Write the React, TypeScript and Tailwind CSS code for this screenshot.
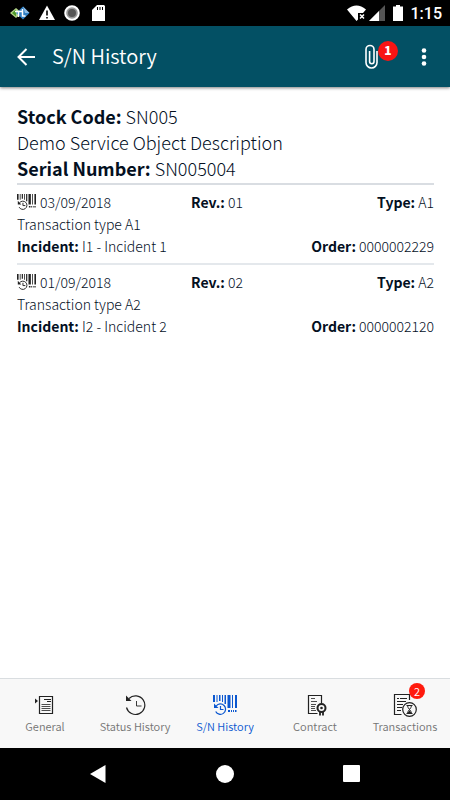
import type { ReactNode } from 'react';

function BarcodeHistoryIcon({ className }: { className: string }) {
  return (
    <svg viewBox="0 0 24 20" className={className} fill="currentColor" aria-hidden="true">
      <path d="M0 0h2v7H0zM3.500 0h1v7h-1zM6 0h1.500v6H6zM9 0h1v7H9zM11.500 0h1.500v9h-1.500zM14.500 0h3v13h-3zM19 0h1v13h-1zM22 0h2v13h-2z" />
      <path d="M15 15h2v2h-2zM18 15h1v2h-1zM20 15h1v2h-1zM22 15h1.500v2H22z" />
      <path d="M3.200 11a5.200 5.200 0 1 1-.5 5.500M7.500 11v3.500h3" fill="none" stroke="currentColor" strokeWidth="1.200" />
      <path d="M1 8.500v4.500h4.500z" />
    </svg>
  );
}

function GeneralIcon() {
  return (
    <svg viewBox="0 0 20 20" className="size-5" fill="none" stroke="currentColor" aria-hidden="true">
      <path d="M4.500 1.500h13v17h-13z" strokeWidth="1.200" />
      <path d="M9 4.500h7M12 6.500h4" />
      <path d="M6.500 9.500h9M6.500 11.500h9M6.500 13.500h9M6.500 15.500h9" strokeWidth=".8" />
      <path d="M0 3.500l3 2.500-3 2.500z" fill="currentColor" stroke="none" />
    </svg>
  );
}

function StatusIcon() {
  return (
    <svg viewBox="0 0 22 22" className="size-[22px]" fill="none" stroke="currentColor" aria-hidden="true">
      <path d="M5 4.500a9.300 9.300 0 1 1-2.500 9" strokeWidth="1.200" />
      <path d="M2 1.500v5.500h5.500z" fill="currentColor" stroke="none" />
      <path d="M12.500 7v5h5" strokeWidth=".9" />
    </svg>
  );
}

function ContractIcon() {
  return (
    <svg viewBox="-4 0 24 22" className="h-[22px] w-6" fill="none" stroke="currentColor" aria-hidden="true">
      <path d="M14.500 9V1.500h-13v18h9" strokeWidth="1.200" />
      <path d="M4 4.500h4M4 7.500h6M4 10.500h5M4 12.500h4M4 14.500h4M4 16.500h5" strokeWidth=".8" />
      <circle cx="14.500" cy="14" r="4" strokeWidth="2" />
      <circle cx="14.500" cy="14" r="1.300" fill="currentColor" stroke="none" />
      <path d="M13 18v3.500M16 18v3.500" strokeWidth="1.800" />
    </svg>
  );
}

function TransactionsIcon() {
  return (
    <svg viewBox="0 0 24 24" className="size-6" fill="none" stroke="currentColor" aria-hidden="true">
      <path d="M16.500 7V1.500h-15v20h7" strokeWidth="1.200" />
      <path d="M4 5.500h2M7 5.500h7M4 8.500h9M4 11.500h6M4 14.500h5M4 17.500h4" />
      <circle cx="16.500" cy="16.500" r="6.800" strokeWidth="1.200" />
      <path d="M13.500 12.500h6M13.500 20.500h6M14.500 12.500c0 3 4 5 4 8M18.500 12.500c0 3-4 5-4 8" />
      <path d="M14.500 20l2-2.500 2 2.500z" fill="currentColor" stroke="none" />
    </svg>
  );
}

function StatusBar() {
  return (
    <div className="flex h-[26px] items-center justify-between bg-black pl-[10px] pr-2 text-white">
      <div className="flex items-center gap-2">
        <svg viewBox="0 0 20 16" className="h-4 w-5" aria-hidden="true">
          <path d="M0 8l6-5 6 5-6 5z" fill="#b5d48a" />
          <path d="M2 8l4-3.500v7z" fill="#4f9a2c" />
          <path d="M6 8l7-6.500L19.500 8 13 14.500z" fill="#2f7fc4" />
          <path d="M13 1.500L19.500 8H15z" fill="#8cbbe4" />
          <path d="M5 6.500h7M8.500 6v6M12.500 4v7h3" stroke="#fff" strokeWidth="1.500" fill="none" />
        </svg>
        <svg viewBox="0 0 18 16" className="h-4 w-[18px]" aria-hidden="true">
          <path d="M9 .5L17 15H1z" fill="#fff" />
          <path d="M9 5.500v5M9 12v1.500" stroke="#000" strokeWidth="1.600" />
        </svg>
        <svg viewBox="0 0 16 16" className="size-4" aria-hidden="true">
          <circle cx="8" cy="8" r="6.800" fill="#999" stroke="#fff" strokeWidth="2" />
          <circle cx="8" cy="8" r="4" fill="#555" />
        </svg>
        <svg viewBox="0 0 14 16" className="ml-1 h-4 w-[14px]" aria-hidden="true">
          <path d="M5 0h7l1 1v15H0V5z" fill="#fff" />
          <path d="M5.500 2v3M8 2v3M10.500 2v3" stroke="#000" />
        </svg>
      </div>
      <div className="flex items-center">
        <svg viewBox="0 0 20 16" className="h-4 w-5" aria-hidden="true">
          <path d="M0 4.500Q9.500-3.500 19 4.500L16 8h-5v6.500L9.500 16z" fill="#fff" />
          <path d="M13 9.500l4 4M17 9.500l-4 4" stroke="#fff" strokeWidth="1.500" />
        </svg>
        <svg viewBox="0 0 16 16" className="ml-[2px] size-4" aria-hidden="true">
          <path d="M16 0v16H0z" fill="#555" />
          <path d="M10 6v10H0z" fill="#fff" />
        </svg>
        <svg viewBox="0 0 10 16" className="ml-2 h-4 w-[10px]" aria-hidden="true">
          <path d="M3 0h4v1.500h3V16H0V1.500h3z" fill="#fff" />
        </svg>
        <span className="ml-2 pt-[2px] font-[Roboto] text-base font-medium">1:15</span>
      </div>
    </div>
  );
}

type Entry = { date: string; rev: string; type: string; description: string; incident: string; order: string };

const entries: Entry[] = [
  { date: '03/09/2018', rev: '01', type: 'A1', description: 'Transaction type A1', incident: 'I1 - Incident 1', order: '0000002229' },
  { date: '01/09/2018', rev: '02', type: 'A2', description: 'Transaction type A2', incident: 'I2 - Incident 2', order: '0000002120' },
];

function Field({ name, value }: { name: string; value: string }) {
  return (
    <span>
      <b className="font-bold">{name}:</b> {value}
    </span>
  );
}

function HistoryEntry({ entry, last }: { entry: Entry; last: boolean }) {
  return (
    <li className={last ? 'pt-[6px]' : 'border-b-2 border-[#e4e8ec] pb-[6px] pt-[6px]'}>
      <div className="grid grid-cols-[174px_1fr_auto]">
        <span className="flex items-center gap-1">
          <BarcodeHistoryIcon className="h-4 w-[19px] text-[#222]" />
          {entry.date}
        </span>
        <Field name="Rev." value={entry.rev} />
        <Field name="Type" value={entry.type} />
      </div>
      <p>{entry.description}</p>
      <div className="flex justify-between">
        <Field name="Incident" value={entry.incident} />
        <Field name="Order" value={entry.order} />
      </div>
    </li>
  );
}

function Tab({ label, icon, active, badge }: { label: string; icon: ReactNode; active?: boolean; badge?: string }) {
  return (
    <button
      type="button"
      aria-current={active ? 'page' : undefined}
      className={`flex flex-1 basis-0 flex-col items-center whitespace-nowrap text-[11px] font-[350] ${active ? 'text-[#0a57d0]' : 'text-[#747474]'}`}
    >
      <span className={`relative flex h-7 items-center ${active ? '' : 'text-[#222]'}`}>
        {icon}
        {badge && (
          <span className="absolute -right-2 -top-2 flex size-4 items-center justify-center rounded-full bg-[#ff1a0d] text-[11px] text-white">{badge}</span>
        )}
      </span>
      <span className="leading-[14px]">{label}</span>
    </button>
  );
}

export default function App() {
  return (
    <div className="flex min-h-screen flex-col bg-white font-['Noto_Sans_CJK_SC',sans-serif] text-[#04101f]">
      <StatusBar />
      <header className="z-10 flex h-[61px] items-center bg-[#035064] px-4 text-white shadow-[0_1px_3px_rgba(0,0,0,0.5)]">
        <button type="button" aria-label="Back" className="w-5">
          <svg viewBox="0 0 20 20" className="size-5" fill="none" stroke="currentColor" strokeWidth="2" aria-hidden="true">
            <path d="M19 10H3M10.500 2L2.500 10l8 8" />
          </svg>
        </button>
        <h1 className="ml-4 flex-1 pb-[2px] text-xl font-[350]">S/N History</h1>
        <button type="button" aria-label="Attachments" className="relative mr-9">
          <svg viewBox="0 0 14 26" className="h-[26px] w-[14px]" fill="none" stroke="currentColor" strokeWidth="1.600" aria-hidden="true">
            <path d="M13 7v11.500a5.500 5.500 0 0 1-11 0V5.500a4 4 0 0 1 8 0v12a2.200 2.200 0 0 1-4.400 0V7" />
          </svg>
          <span className="absolute -right-5 -top-[3px] flex size-5 items-center justify-center rounded-full bg-[#f81414] pb-px text-xs font-black">1</span>
        </button>
        <button type="button" aria-label="More options" className="w-5">
          <svg viewBox="0 0 20 20" className="size-5" fill="currentColor" aria-hidden="true">
            <circle cx="10" cy="3.500" r="2.300" /><circle cx="10" cy="10" r="2.300" /><circle cx="10" cy="16.500" r="2.300" />
          </svg>
        </button>
      </header>
      <main className="flex-1 pl-[17px] pr-4 pt-4">
        <section className="border-b-2 border-[#d9dde2] pb-[2px] text-lg font-light leading-[26px]">
          <p><Field name="Stock Code" value="SN005" /></p>
          <p>Demo Service Object Description</p>
          <p><Field name="Serial Number" value="SN005004" /></p>
        </section>
        <ul className="text-sm font-light leading-[22px]">
          {entries.map((entry, i) => (
            <HistoryEntry key={entry.date} entry={entry} last={i === entries.length - 1} />
          ))}
        </ul>
      </main>
      <nav aria-label="Sections" className="flex h-[70px] border-t border-[#d9dde0] bg-[#f8f8f8] pt-3">
        <Tab label="General" icon={<GeneralIcon />} />
        <Tab label="Status History" icon={<StatusIcon />} />
        <Tab label="S/N History" icon={<BarcodeHistoryIcon className="h-5 w-6" />} active />
        <Tab label="Contract" icon={<ContractIcon />} />
        <Tab label="Transactions" icon={<TransactionsIcon />} badge="2" />
      </nav>
      <div className="flex h-[52px] items-center justify-around bg-black px-9 text-white">
        <button type="button" aria-label="System back"><svg viewBox="0 0 18 18" className="size-[18px]" fill="currentColor"><path d="M0 9L15.500 0v18z" /></svg></button>
        <button type="button" aria-label="Home"><svg viewBox="0 0 18 18" className="size-[18px]" fill="currentColor"><circle cx="9" cy="9" r="9" /></svg></button>
        <button type="button" aria-label="Recent apps"><svg viewBox="0 0 18 18" className="size-[18px]" fill="currentColor"><rect x="1" y="0" width="17" height="17" rx="1" /></svg></button>
      </div>
    </div>
  );
}
